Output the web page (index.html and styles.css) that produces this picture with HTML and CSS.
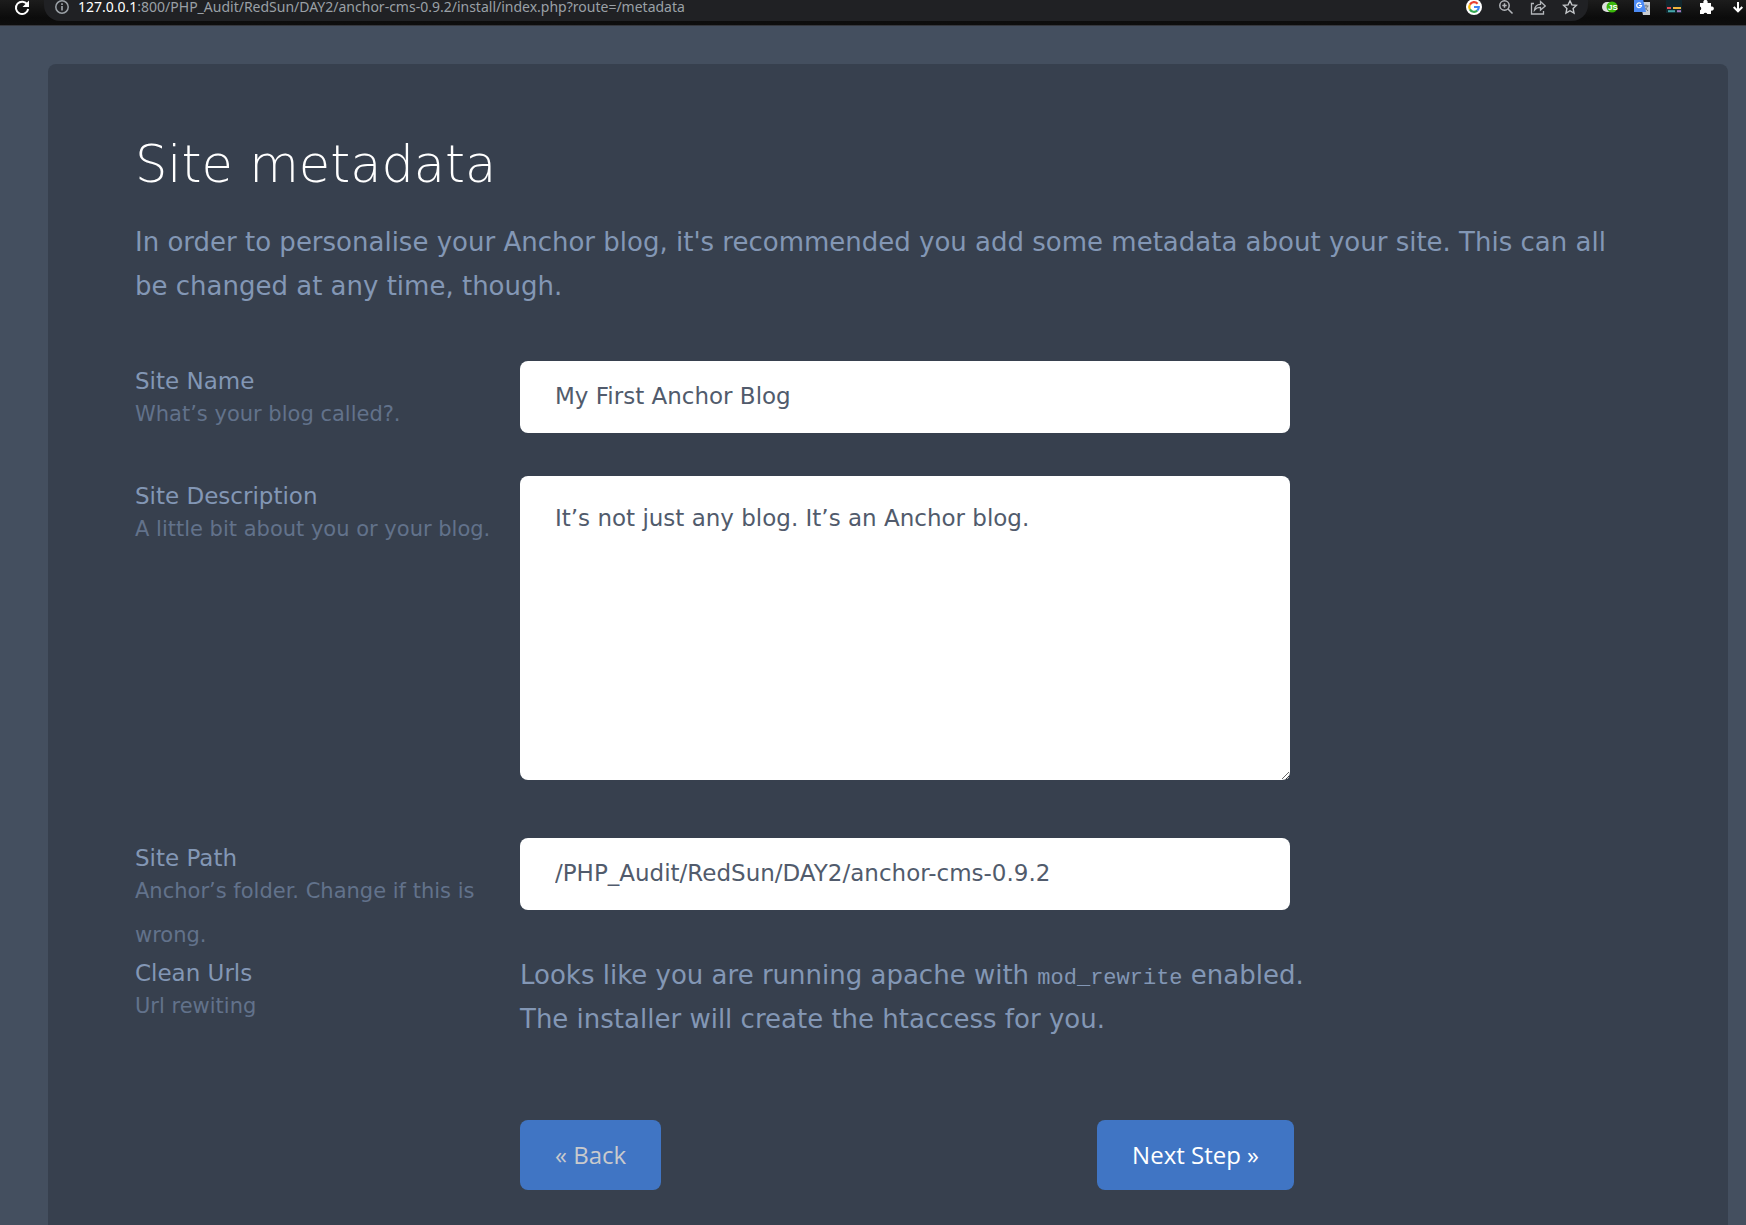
FILE: index.html
```html
<!DOCTYPE html>
<html lang="en">
<head>
<meta charset="utf-8">
<meta name="viewport" content="width=device-width, initial-scale=1">
<title>Site metadata</title>
<link rel="stylesheet" href="styles.css">
</head>
<body>
<header class="toolbar">
  <button class="tool reload" type="button" aria-label="Reload">
    <svg width="16" height="16" viewBox="0 0 16 16" fill="none" stroke="#fff" stroke-width="2"><path d="M13.4 4.6A6.2 6.2 0 1 0 14.2 9"/><path d="M15 0.500v6.500H8.500z" fill="#fff" stroke="none"/></svg>
  </button>
  <div class="address">
    <svg width="14" height="14" viewBox="0 0 14 14" fill="none" stroke="#9aa0a6" stroke-width="1.500"><circle cx="7" cy="7" r="6.200"/><path d="M7 6v4.500M7 3.300v1.600" stroke-width="1.700"/></svg>
    <span class="url"><b>127.0.0.1</b>:800/PHP_Audit/RedSun/DAY2/anchor-cms-0.9.2/install/index.php?route=/metadata</span>
    <span class="actions">
      <svg width="16" height="16" viewBox="0 0 16 16"><circle cx="8" cy="7" r="8" fill="#fff"/><g fill="none" stroke-width="2.200" transform="translate(0 -1)"><path d="M11.600 4.700A4.800 4.800 0 0 0 3.900 5.600" stroke="#ea4335"/><path d="M3.900 5.600A4.800 4.800 0 0 0 3.900 10.400" stroke="#fbbc05"/><path d="M3.900 10.400A4.800 4.800 0 0 0 11.200 11.600" stroke="#34a853"/><path d="M11.200 11.600A4.800 4.800 0 0 0 12.800 8H8" stroke="#4285f4"/></g></svg>
      <svg width="16" height="16" viewBox="0 1 16 16" fill="none" stroke="#b4b7bb" stroke-width="1.500"><circle cx="6.500" cy="6.500" r="4.700"/><path d="M10 10l4.500 4.500M4.300 6.500h4.400M6.500 4.300v4.400"/></svg>
      <svg width="16" height="16" viewBox="0 1 16 16" fill="none" stroke="#b4b7bb" stroke-width="1.300"><path d="M4 4.500H1.500v10.500h12V12"/><path d="M4.500 11c.4-4 2.700-5.600 6-5.700V2.500L15.300 7l-4.800 4V8.300c-2.600 0-4.500.7-6 2.700z"/></svg>
      <svg width="16" height="16" viewBox="0 1 16 16" fill="none" stroke="#c4c7ca" stroke-width="1.400"><path d="M8 1.800l1.900 4.100 4.500.5-3.300 3.100.9 4.500L8 11.700 4 14l.9-4.500L1.600 6.400l4.500-.5z"/></svg>
    </span>
  </div>
  <div class="extensions">
    <svg width="16" height="16" viewBox="0 0 16 16"><rect x="0" y="2" width="14" height="10" rx="5" fill="#ddd"/><circle cx="10" cy="7" r="5.500" fill="#3cb80c"/><text x="6" y="10" class="js-mark">JS</text></svg>
    <svg width="16" height="16" viewBox="0 1 16 16"><path d="M6 3h10v13H9z" fill="#c9cdd2"/><path d="M9.500 7h5M12 5.500V7M13.500 7c-.5 2-2 3.500-3.500 4.500M11 8.500l3 3.500" stroke="#6e7780" fill="none"/><path d="M0 0h9l3 13H0z" fill="#4c8bf5"/><path d="M7 4.800A2.400 2.400 0 1 0 7.500 6.500H5" stroke="#fff" fill="none" stroke-width="1.200"/></svg>
    <svg width="16" height="16" viewBox="0 0 16 16"><path d="M0 0h16v13H0z" fill="#10262d"/><path d="M1 8h4" stroke="#e34b55" stroke-width="2"/><path d="M7 8h8" stroke="#efb43c" stroke-width="2"/><path d="M2 11.200h7" stroke="#45a5a8" stroke-width="2"/><path d="M11 11.200h4" stroke="#a77ac0" stroke-width="2"/></svg>
    <svg width="16" height="16" viewBox="0 1 16 16"><path d="M2 4h3.500a2.200 2.200 0 1 1 4 0H13v3.600a2.100 2.100 0 1 1 0 3.900V15H9.300a2 2 0 0 0-3.700 0H2v-3.700a2 2 0 0 0 0-3.700z" fill="#fff"/></svg>
    <svg width="16" height="16" viewBox="0 0 16 16" fill="none" stroke="#fff" stroke-width="2"><path d="M8 2v9M3.700 7L8 11.300 12.300 7"/></svg>
  </div>
</header>

<main class="panel">
  <h1>Site metadata</h1>
  <p class="intro">In order to personalise your Anchor blog, it's recommended you add some metadata about your site. This can all be changed at any time, though.</p>

  <form class="form">
    <div class="row">
      <label class="caption" for="site-name">Site Name <span class="hint">What’s your blog called?.</span></label>
      <input class="field" id="site-name" type="text" value="My First Anchor Blog">
    </div>
    <div class="row">
      <label class="caption" for="site-description">Site Description <span class="hint">A little bit about you or your blog.</span></label>
      <textarea class="field area" id="site-description">It’s not just any blog. It’s an Anchor blog.</textarea>
    </div>
    <div class="row">
      <label class="caption" for="site-path">Site Path <span class="hint">Anchor’s folder. Change if this is wrong.</span></label>
      <input class="field" id="site-path" type="text" value="/PHP_Audit/RedSun/DAY2/anchor-cms-0.9.2">
    </div>
    <div class="row">
      <div class="caption">Clean Urls <span class="hint">Url rewiting</span></div>
      <p class="note">Looks like you are running apache with <code>mod_rewrite</code> enabled. The installer will create the htaccess for you.</p>
    </div>
    <div class="buttons">
      <a class="button back" href="#">« Back</a>
      <button class="button" type="submit">Next Step »</button>
    </div>
  </form>
</main>
</body>
</html>
```
FILE: styles.css
```css
* {
  box-sizing: border-box;
}

body {
  display: flex;
  flex-direction: column;
  min-height: 100vh;
  margin: 0;
  background: #444f5f;
  color: #8397b5;
  font-family: "DejaVu Sans", sans-serif;
  font-size: 26px;
  line-height: 44px;
}

/* Browser toolbar */
.toolbar {
  display: flex;
  align-items: flex-start;
  height: 26px;
  background: linear-gradient(#1c1c1c, #0b0b0b 18px, #0e0e0e);
  border-bottom: 1px solid #35373d;
  font-family: "Noto Sans", sans-serif;
  font-size: 14px;
  line-height: 14px;
}

.toolbar svg {
  display: block;
  flex: none;
}

.tool {
  width: 44px;
  padding: 0 0 0 14px;
  border: 0;
  background: none;
}

.address {
  display: flex;
  flex: 1;
  gap: 9px;
  height: 21px;
  padding: 0 10px 0 11px;
  border-radius: 0 0 16px 16px;
  background: #202124;
}

.url {
  flex: 1;
  color: #9aa0a6;
}

.url b {
  color: #fff;
  font-weight: 400;
}

.actions,
.extensions {
  display: flex;
  gap: 16px;
}

.extensions {
  padding: 0 0 0 14px;
}

.js-mark {
  fill: #fff;
  font: bold 8px "Liberation Sans", sans-serif;
}

/* Installer panel */
.panel {
  flex: 1;
  margin: 38px 18px 0 48px;
  padding: 70px 87px 24px;
  border-radius: 8px 8px 0 0;
  background: #37404e;
}

h1 {
  margin: 0 0 24px;
  color: #fff;
  font-family: "DejaVu Sans Light", "DejaVu Sans", sans-serif;
  font-size: 51px;
  font-weight: 200;
  line-height: 62px;
}

.intro {
  margin: 0 0 53px;
}

.row {
  display: grid;
  grid-template-columns: 385px minmax(0, 800px);
  align-items: start;
}

.caption {
  display: block;
  margin-bottom: -6px;
  padding-top: 8px;
  font-size: 23px;
  line-height: 24px;
}

.hint {
  display: block;
  margin-top: -1px;
  color: #62728b;
  font-size: 21px;
  line-height: 44px;
}

.field {
  width: 100%;
  max-width: 770px;
  height: 72px;
  margin: 0 0 43px;
  padding: 0 35px 2px;
  border: 0;
  border-radius: 8px;
  background: #fff;
  color: #515b6c;
  font: 23px/32px "DejaVu Sans", sans-serif;
}

.area {
  height: 304px;
  margin-bottom: 58px;
  padding: 26px 35px;
  resize: vertical;
}

.note {
  margin: 0;
}

code {
  font-family: "Liberation Mono", monospace;
  font-size: 22px;
  line-height: 24px;
}

.buttons {
  display: flex;
  justify-content: space-between;
  max-width: 1159px;
  padding: 79px 0 0 385px;
}

.button {
  padding: 0 35px;
  border: 0;
  border-radius: 8px;
  background: #4075c4;
  color: #fff;
  font: 24px/70px "Open Sans", sans-serif;
  text-decoration: none;
}

.back {
  color: #c9cacd;
}
```
